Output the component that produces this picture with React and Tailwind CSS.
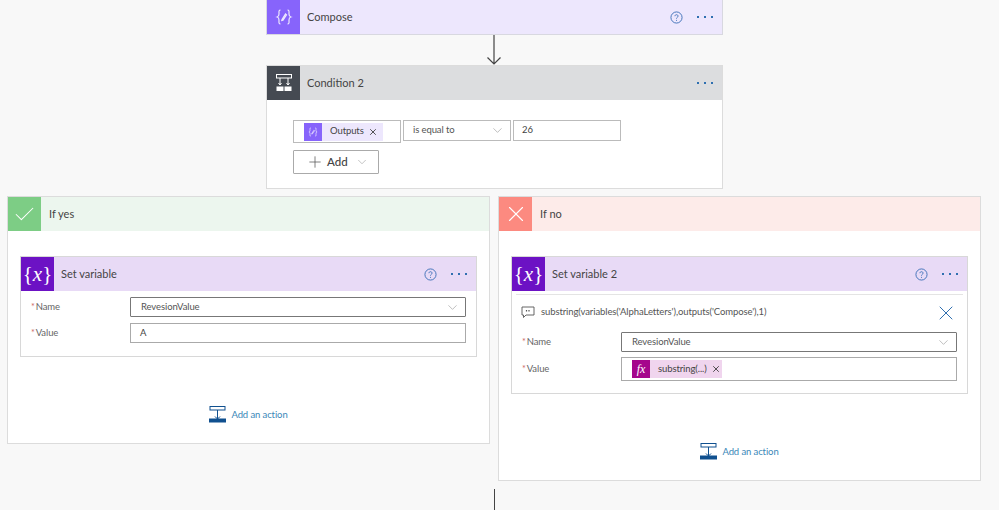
import { ChevronDown, Plus, X, Check } from "lucide-react";

const font = "font-['Lato',sans-serif]";
const small = "text-[9.500px] tracking-[-0.1px]";

const HelpIcon = ({ className = "" }) => (
  <svg viewBox="0 0 14 14" className={`w-[13px] h-[13px] ${className}`} fill="none" stroke="#3d6fb8" strokeWidth="1">
    <circle cx="7" cy="7" r="6" />
    <path d="M5.3 5.6c0-1 .8-1.6 1.7-1.6s1.7.6 1.7 1.5c0 1.3-1.7 1.3-1.7 2.7" />
    <path d="M7 9.6v1" />
  </svg>
);

const Dots = () => (
  <div className="flex gap-[5px] items-center">
    <span className="w-[2px] h-[2px] bg-[#2f6fb0]" />
    <span className="w-[2px] h-[2px] bg-[#2f6fb0]" />
    <span className="w-[2px] h-[2px] bg-[#2f6fb0]" />
  </div>
);

const ComposeIcon = ({ tiny }) => (
  <svg viewBox="0 0 20 20" className={tiny ? "w-[12px] h-[12px]" : "w-[20px] h-[20px]"} fill="none" stroke="#fff" strokeOpacity="0.85" strokeWidth="1.200">
    <path d="M6.5 3C4.5 3 5 5 5 7s-.3 2.500-1.800 3C4.700 10.500 5 11 5 13s-.5 4 1.500 4" />
    <path d="M13.500 3c2 0 1.500 2 1.500 4s.3 2.500 1.800 3c-1.500.5-1.800 1-1.800 3s.5 4-1.500 4" />
    <path d="M8 12.500 11.500 7l1 .8L9 13.200 7.800 13.500z" />
  </svg>
);

const ConditionIcon = () => (
  <svg viewBox="0 0 18 18" className="w-[18px] h-[18px]" fill="none" stroke="#fff" strokeWidth="1">
    <rect x="1.500" y="0.500" width="15" height="3.500" />
    <path d="M5 4v7M13 4v7" />
    <path d="M3.500 9 5 11l1.500-2M11.500 9 13 11l1.500-2" />
    <rect x="1.500" y="12.500" width="7" height="4.500" fill="#fff" stroke="none" />
    <rect x="9.500" y="12.500" width="7" height="4.500" fill="#fff" stroke="none" />
  </svg>
);

const AddActionIcon = () => (
  <svg viewBox="0 0 17 18" className="w-[17px] h-[18px]" fill="none" stroke="#10508f" strokeWidth="1">
    <rect x="1" y="0.500" width="15" height="3.500" />
    <path d="M8.500 4v9M6 10.500l2.500 2.500 2.500-2.500" />
    <rect x="0.500" y="13" width="16" height="3" fill="#10508f" />
  </svg>
);

const VariableIcon = () => (
  <span className="text-white text-[21px] leading-none font-['Liberation_Serif',serif]">
    {"{"}
    <i>x</i>
    {"}"}
  </span>
);

const CardHeader = ({ iconBg, headerBg, icon, title, help = true }) => (
  <div className={`flex items-center h-[34px] ${headerBg}`}>
    <div className={`w-[33px] h-full flex items-center justify-center shrink-0 ${iconBg}`}>{icon}</div>
    <span className="ml-[7px] text-[11px] text-[#444] flex-1">{title}</span>
    {help && <HelpIcon className="mr-[14px]" />}
    <div className="mr-[9px]">
      <Dots />
    </div>
  </div>
);

const Field = ({ label, children }) => (
  <div className="flex items-center">
    <div className={`w-[109px] pl-[10px] text-[#666] ${small}`}>
      <span className="text-[#c66] mr-[1px] text-[9px]">*</span>
      {label}
    </div>
    {children}
  </div>
);

const NameSelect = () => (
  <div className={`w-[336px] h-[20px] flex items-center justify-between border border-[#777] rounded-[1px] pl-[10px] pr-[5px] text-[#555] bg-white ${small}`}>
    RevesionValue
    <ChevronDown className="w-[15px] h-[15px] text-[#999]" strokeWidth={1} />
  </div>
);

const AddAction = () => (
  <div className={`flex items-center justify-center gap-[5px] text-[#3a87b8] ${small}`}>
    <AddActionIcon />
    Add an action
  </div>
);

const Branch = ({ headerBg, iconBg, icon, title, children }) => (
  <div className="w-[483px] border border-[#dcdcdc] bg-white">
    <div className={`flex items-center h-[34px] ${headerBg}`}>
      <div className={`w-[33px] h-full flex items-center justify-center ${iconBg}`}>{icon}</div>
      <span className="ml-[8px] text-[11px] text-[#444]">{title}</span>
    </div>
    {children}
  </div>
);

export default function App() {
  return (
    <div className={`w-[999px] h-[510px] overflow-hidden bg-[#f8f8f8] flex flex-col ${font}`}>
      <div className="w-[457px] ml-[266px] border border-t-0 border-[#d8d8e0] h-[35px]">
        <CardHeader
          iconBg="bg-[#8764fb]"
          headerBg="bg-[#ede7fd]"
          icon={<ComposeIcon />}
          title="Compose"
        />
      </div>

      <svg viewBox="0 0 16 30" className="w-[16px] h-[30px] ml-[486px] shrink-0" fill="none" stroke="#444" strokeWidth="1.200">
        <path d="M8 0v29M1.500 22.500 8 29l6.500-6.500" />
      </svg>

      <div className="w-[457px] h-[124px] ml-[266px] border border-[#dcdcdc] bg-white">
        <CardHeader
          iconBg="bg-[#454a52]"
          headerBg="bg-[#dcdddf]"
          icon={<ConditionIcon />}
          title="Condition 2"
          help={false}
        />
        <div className="pl-[26px] pt-[20px]">
          <div className="flex items-start gap-[2px]">
            <div className="w-[108px] h-[23px] border border-[#bbb] flex items-center pl-[10px]">
              <div className="flex items-center h-[18px] bg-[#ede7fd] w-[79px]">
                <div className="w-[18px] h-[18px] shrink-0 bg-[#8764fb] flex items-center justify-center">
                  <ComposeIcon tiny />
                </div>
                <span className={`ml-[8px] text-[#444] ${small}`}>Outputs</span>
                <X className="w-[10px] h-[10px] ml-[4px] text-[#333]" strokeWidth={2} />
              </div>
            </div>
            <div className={`w-[108px] h-[21px] border border-[#bbb] flex items-center justify-between pl-[9px] pr-[5px] text-[#555] ${small}`}>
              is equal to
              <ChevronDown className="w-[15px] h-[15px] text-[#999]" strokeWidth={1} />
            </div>
            <div className={`w-[108px] h-[21px] border border-[#bbb] flex items-center pl-[8px] text-[#444] ${small}`}>
              26
            </div>
          </div>
          <div className="mt-[7px] w-[86px] h-[24px] border border-[#aaa] rounded-[1px] flex items-center pl-[12px] text-[11.500px] text-[#444]">
            <Plus className="w-[18px] h-[18px] text-[#555]" strokeWidth={1} />
            <span className="ml-[3px] font-medium">Add</span>
            <ChevronDown className="w-[14px] h-[14px] ml-[7px] text-[#999]" strokeWidth={1} />
          </div>
        </div>
      </div>

      <div className="flex items-start gap-[8px] ml-[7px] mt-[7px]">
        <Branch
          headerBg="bg-[#ecf6ee]"
          iconBg="bg-[#7dcd85]"
          icon={<Check className="w-[25px] h-[25px] text-white" strokeWidth={1} />}
          title="If yes"
        >
          <div className="h-[212px] px-[12px] pt-[25px]">
            <div className="border border-[#d8d8d8] h-[101px]">
              <CardHeader
                iconBg="bg-[#6c12c4]"
                headerBg="bg-[#e8daf6]"
                icon={<VariableIcon />}
                title="Set variable"
              />
              <div className="pt-[6px] flex flex-col gap-[6px]">
                <Field label="Name">
                  <NameSelect />
                </Field>
                <Field label="Value">
                  <div className={`w-[336px] h-[20px] flex items-center border border-[#aaa] pl-[9px] text-[#444] ${small}`}>A</div>
                </Field>
              </div>
            </div>
            <div className="mt-[49px]">
              <AddAction />
            </div>
          </div>
        </Branch>

        <Branch
          headerBg="bg-[#fdebe9]"
          iconBg="bg-[#fc8a80]"
          icon={<X className="w-[26px] h-[26px] text-white" strokeWidth={1} />}
          title="If no"
        >
          <div className="h-[249px] px-[12px] pt-[25px]">
            <div className="border border-[#d8d8d8] h-[138px]">
              <CardHeader
                iconBg="bg-[#6c12c4]"
                headerBg="bg-[#e8daf6]"
                icon={<VariableIcon />}
                title="Set variable 2"
              />
              <div className="mx-[4px] mt-[3px] border-t border-[#e4e4e4] h-[36px] flex items-center pl-[5px] pr-[5px]">
                <svg viewBox="0 0 14 13" className="w-[14px] h-[13px]" fill="none" stroke="#555" strokeWidth="0.900">
                  <path d="M1 1h12v8H5l-2.500 2.500V9H1z" />
                  <path d="M5.500 4v1.500M8 4v1.500" strokeWidth="1.200" />
                </svg>
                <span className={`ml-[6px] flex-1 text-[#555] ${small}`}>
                  {"substring(variables('AlphaLetters'),outputs('Compose'),1)"}
                </span>
                <X className="w-[24px] h-[24px] text-[#2f6fb0]" strokeWidth={1} />
              </div>
              <div className="pt-[2px] flex flex-col gap-[5px]">
                <Field label="Name">
                  <NameSelect />
                </Field>
                <Field label="Value">
                  <div className="w-[336px] h-[24px] flex items-center border border-[#aaa] pl-[10px]">
                    <div className="flex items-center h-[18px] bg-[#f0d5ee] w-[90px]">
                      <div className="w-[18px] h-[18px] shrink-0 bg-[#a5068c] flex items-center justify-center text-white text-[12px] italic font-['Liberation_Serif',serif]">
                        fx
                      </div>
                      <span className={`ml-[8px] text-[#444] ${small}`}>substring(...)</span>
                      <X className="w-[10px] h-[10px] ml-[4px] text-[#333]" strokeWidth={2} />
                    </div>
                  </div>
                </Field>
              </div>
            </div>
            <div className="mt-[49px]">
              <AddAction />
            </div>
          </div>
        </Branch>
      </div>

      <div className="w-[1px] h-[21px] ml-[494px] mt-[8px] bg-[#444] shrink-0" />
    </div>
  );
}
